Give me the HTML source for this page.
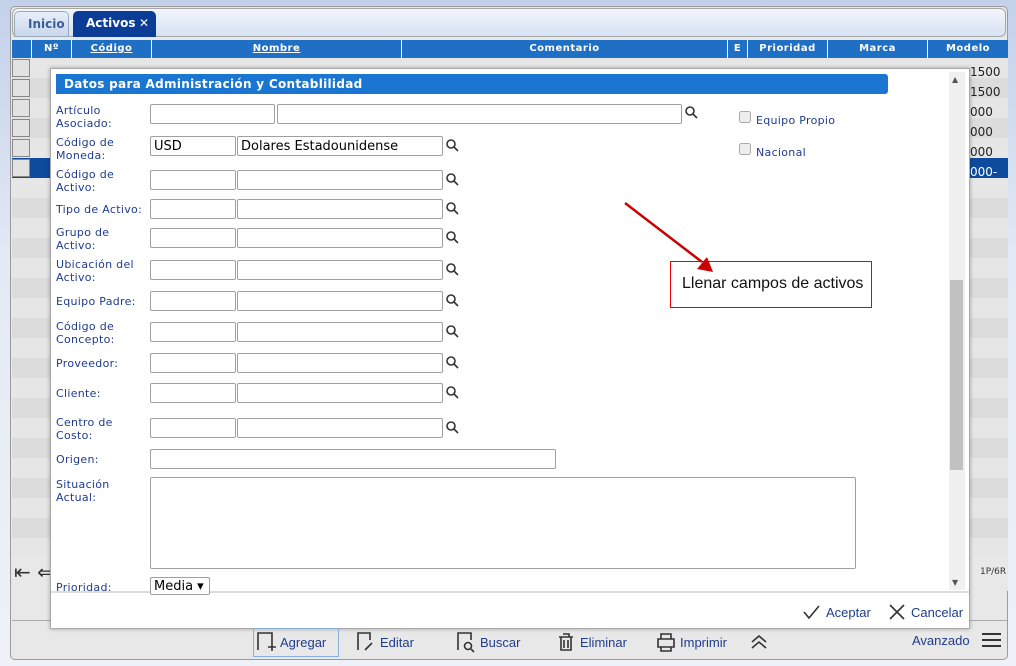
<!DOCTYPE html>
<html><head><meta charset="utf-8"><style>
*{box-sizing:border-box;margin:0;padding:0}
body{width:1016px;height:666px;overflow:hidden;position:relative;background:linear-gradient(#c3d1ea,#e4eaf5 40%,#eef2f8);font-family:"DejaVu Sans",Verdana,sans-serif}
.abs{position:absolute}
.panel{left:10px;top:6px;width:998px;height:654px;border:1px solid #9a9a9a;border-radius:5px;background:#e8e8e8}
.tabbar{left:12px;top:8px;width:994px;height:29px;border:1px solid #a8a8a8;border-radius:6px;background:linear-gradient(#f2f6fc,#d6e2f3)}
.tab{top:11px;height:26px;border-radius:5px 5px 0 0;font-size:12px;font-weight:bold;line-height:25px;padding-left:13px}
.hdr{left:12px;top:40px;width:996px;height:18px;background:#1f6fc5;color:#fff;font-size:10px;font-weight:bold;letter-spacing:.5px}
.hdr div{position:absolute;top:0;height:18px;line-height:18px;text-align:center;border-left:1px solid #fff}
.cb{left:12px;width:18px;height:18px;background:#e2e2e2;border:1px solid #888}
.modal{left:50px;top:68px;width:920px;height:561px;background:#fff;border:1px solid #aaa;box-shadow:0 0 4px rgba(0,0,0,.3)}
.mh{left:56px;top:74px;width:832px;height:20px;background:#1b76d2;border-radius:0 3px 3px 0;color:#fff;font-size:12px;font-weight:bold;line-height:20px;padding-left:8px;letter-spacing:.3px}
.lb{left:56px;font-size:11px;color:#1f3c8e;line-height:13px;letter-spacing:.3px}
.in{height:20px;border:1px solid #a0a0a0;border-radius:2px;background:#fff;font-size:13px;line-height:18px;padding:1px 0 0 3px;color:#000}
.tb{top:632px;font-size:13px;color:#1f3c8e;font-family:"Liberation Sans",sans-serif}
</style></head><body>
<div class="abs panel"></div>
<div class="abs tabbar"></div>
<div class="abs tab" style="left:14px;width:55px;border:1px solid #9ab;background:linear-gradient(#e8eef8,#c9d7ec);color:#3b5f9a">Inicio</div>
<div class="abs tab" style="left:73px;width:83px;background:#0c3d96;color:#fff">Activos<span style="position:absolute;left:66px">✕</span></div>
<div class="abs hdr">
<div style="left:19px;width:40px">Nº</div>
<div style="left:59px;width:80px;text-decoration:underline">Código</div>
<div style="left:139px;width:250px;text-decoration:underline">Nombre</div>
<div style="left:389px;width:326px">Comentario</div>
<div style="left:715px;width:20px">E</div>
<div style="left:735px;width:80px">Prioridad</div>
<div style="left:815px;width:100px">Marca</div>
<div style="left:915px;width:81px">Modelo</div>
</div>
<div class="abs" style="left:12px;top:58px;width:996px;height:497px;background:repeating-linear-gradient(#e6e6e6 0 20px,#dcdcdc 20px 40px)"></div>
<div class="abs" style="left:12px;top:158px;width:996px;height:20px;background:#0f4b9d"></div>
<div class="abs cb" style="top:59px"></div><div class="abs cb" style="top:79px"></div><div class="abs cb" style="top:99px"></div><div class="abs cb" style="top:119px"></div><div class="abs cb" style="top:139px"></div><div class="abs cb" style="top:159px"></div>
<div class="abs" style="left:970px;top:62px;font-size:12px;line-height:20px;color:#222">1500<br>1500<br>000<br>000<br>000<br><span style="color:#fff">000-</span></div>
<div class="abs" style="left:12px;top:555px;width:996px;height:36px;background:#e8e8e8"></div>
<div class="abs" style="left:14px;top:560px;font-size:20px;color:#333">⇤ ⇐</div>
<div class="abs" style="left:980px;top:567px;font-size:9px;color:#333">1P/6R</div>
<div class="abs" style="left:12px;top:620px;width:996px;height:1px;background:#aaa"></div>
<div class="abs modal"></div>
<div class="abs mh">Datos para Administración y Contablilidad</div>
<div class="abs" style="left:949px;top:72px;width:16px;height:518px;background:#f0f0f0"></div>
<div class="abs" style="left:950px;top:280px;width:13px;height:190px;background:#c1c1c1"></div>
<div class="abs" style="left:952px;top:75px;font-size:8px;color:#555">▲</div>
<div class="abs" style="left:952px;top:578px;font-size:8px;color:#555">▼</div>
<div class="abs" style="left:51px;top:591px;width:918px;height:2px;background:#ddd"></div>

<div class="abs lb" style="top:104px">Artículo<br>Asociado:</div>
<div class="abs in" style="left:150px;top:104px;width:125px"></div>
<div class="abs in" style="left:277px;top:104px;width:405px"></div>
<div class="abs lb" style="top:136px">Código de<br>Moneda:</div>
<div class="abs lb" style="top:168px">Código de<br>Activo:</div>
<div class="abs lb" style="top:203px">Tipo de Activo:</div>
<div class="abs lb" style="top:226px">Grupo de<br>Activo:</div>
<div class="abs lb" style="top:258px">Ubicación del<br>Activo:</div>
<div class="abs lb" style="top:295px">Equipo Padre:</div>
<div class="abs lb" style="top:320px">Código de<br>Concepto:</div>
<div class="abs lb" style="top:357px">Proveedor:</div>
<div class="abs lb" style="top:387px">Cliente:</div>
<div class="abs lb" style="top:416px">Centro de<br>Costo:</div>
<div class="abs lb" style="top:453px">Origen:</div>
<div class="abs lb" style="top:478px">Situación<br>Actual:</div>
<div class="abs lb" style="top:581px">Prioridad:</div>

<div class="abs in" style="left:150px;top:136px;width:86px">USD</div>
<div class="abs in" style="left:237px;top:136px;width:206px">Dolares Estadounidense</div>
<div class="abs in" style="left:150px;top:170px;width:86px"></div><div class="abs in" style="left:237px;top:170px;width:206px"></div>
<div class="abs in" style="left:150px;top:199px;width:86px"></div><div class="abs in" style="left:237px;top:199px;width:206px"></div>
<div class="abs in" style="left:150px;top:228px;width:86px"></div><div class="abs in" style="left:237px;top:228px;width:206px"></div>
<div class="abs in" style="left:150px;top:260px;width:86px"></div><div class="abs in" style="left:237px;top:260px;width:206px"></div>
<div class="abs in" style="left:150px;top:291px;width:86px"></div><div class="abs in" style="left:237px;top:291px;width:206px"></div>
<div class="abs in" style="left:150px;top:322px;width:86px"></div><div class="abs in" style="left:237px;top:322px;width:206px"></div>
<div class="abs in" style="left:150px;top:353px;width:86px"></div><div class="abs in" style="left:237px;top:353px;width:206px"></div>
<div class="abs in" style="left:150px;top:383px;width:86px"></div><div class="abs in" style="left:237px;top:383px;width:206px"></div>
<div class="abs in" style="left:150px;top:418px;width:86px"></div><div class="abs in" style="left:237px;top:418px;width:206px"></div>
<div class="abs in" style="left:150px;top:449px;width:406px"></div>
<div class="abs in" style="left:150px;top:477px;width:706px;height:92px"></div>
<div class="abs in" style="left:150px;top:577px;width:60px;height:18px;font-size:13px;line-height:15px">Media ▾</div>

<svg class="abs" style="left:0;top:0" width="1016" height="666">
<g fill="none" stroke="#333" stroke-width="1.6">
<g transform="translate(685,106)"><circle cx="5" cy="5" r="4"/><path d="M8 8l4 4"/></g>
<g transform="translate(446,139)"><circle cx="5" cy="5" r="4"/><path d="M8 8l4 4"/></g>
<g transform="translate(446,173)"><circle cx="5" cy="5" r="4"/><path d="M8 8l4 4"/></g>
<g transform="translate(446,202)"><circle cx="5" cy="5" r="4"/><path d="M8 8l4 4"/></g>
<g transform="translate(446,231)"><circle cx="5" cy="5" r="4"/><path d="M8 8l4 4"/></g>
<g transform="translate(446,263)"><circle cx="5" cy="5" r="4"/><path d="M8 8l4 4"/></g>
<g transform="translate(446,294)"><circle cx="5" cy="5" r="4"/><path d="M8 8l4 4"/></g>
<g transform="translate(446,325)"><circle cx="5" cy="5" r="4"/><path d="M8 8l4 4"/></g>
<g transform="translate(446,356)"><circle cx="5" cy="5" r="4"/><path d="M8 8l4 4"/></g>
<g transform="translate(446,386)"><circle cx="5" cy="5" r="4"/><path d="M8 8l4 4"/></g>
<g transform="translate(446,421)"><circle cx="5" cy="5" r="4"/><path d="M8 8l4 4"/></g>
</g>
<rect x="739.5" y="111.5" width="11" height="11" rx="2" fill="#eee" stroke="#aaa"/>
<rect x="739.5" y="143.5" width="11" height="11" rx="2" fill="#eee" stroke="#aaa"/>
<rect x="670.5" y="261.5" width="201" height="46" fill="#fff" stroke="#e00"/>
<path d="M625 203L702 262" stroke="#c00" stroke-width="2.5"/>
<path d="M713 272L697 269L707 257Z" fill="#c00"/>
<g stroke="#333" stroke-width="1.6" fill="none">
<path d="M804 612l5 6 10-12"/><path d="M890 605l14 14M904 605l-14 14"/>
<path d="M258 650v-17h14v10M268 647h8M272 643v8"/>
<path d="M358 650v-17h12v7M365 650l7-7"/>
<path d="M458 650v-17h13v7"/><circle cx="468" cy="646" r="3.5"/><path d="M471 649l3 3"/>
<path d="M559 637h14M563 634h6v3M561 637v13h10v-13M564 640v8M568 640v8"/>
<path d="M658 639h16v8h-16zM661 639v-5h10v5M661 647v4h10v-4"/>
<path d="M752 642l7-6 7 6M752 648l7-6 7 6"/>
<path d="M982 634h19M982 640h19M982 646h19" stroke-width="2"/>
</g>
</svg>
<div class="abs lb" style="left:756px;top:114px">Equipo Propio</div>
<div class="abs lb" style="left:756px;top:146px">Nacional</div>
<div class="abs" style="left:682px;top:275px;font-family:'Liberation Sans',sans-serif;font-size:16px;color:#111">Llenar campos de activos</div>
<div class="abs tb" style="left:826px;top:605px">Aceptar</div>
<div class="abs tb" style="left:911px;top:605px">Cancelar</div>
<div class="abs" style="left:253px;top:628px;width:86px;height:29px;border:1px solid #8ab0e0"></div>
<div class="abs tb" style="left:280px;top:635px">Agregar</div>
<div class="abs tb" style="left:380px;top:635px">Editar</div>
<div class="abs tb" style="left:480px;top:635px">Buscar</div>
<div class="abs tb" style="left:580px;top:635px">Eliminar</div>
<div class="abs tb" style="left:680px;top:635px">Imprimir</div>
<div class="abs tb" style="left:912px;top:633px">Avanzado</div>
</body></html>
